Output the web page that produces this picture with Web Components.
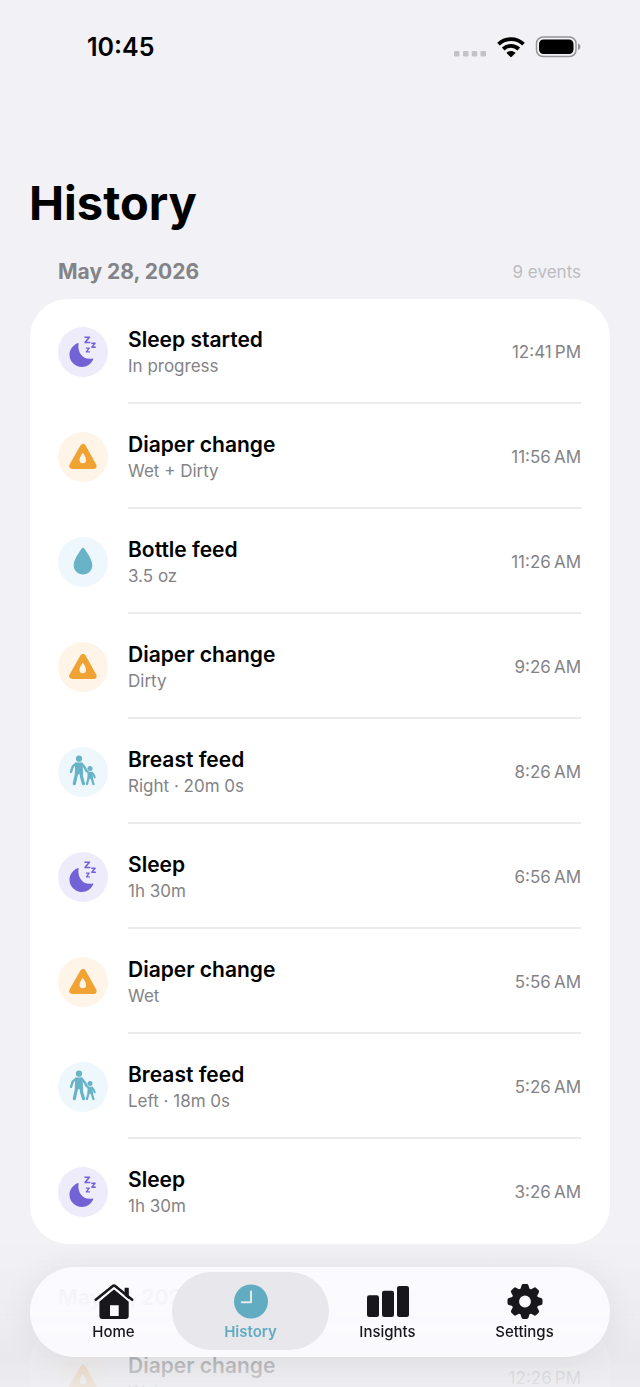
<!DOCTYPE html>
<html lang="en">
<head>
<meta charset="utf-8">
<meta name="viewport" content="width=device-width, initial-scale=1">
<title>History</title>
<style>
  body {
    margin: 0;
    background: #f1f1f6;
    color: #000;
    font-family: Inter, "Noto Sans", sans-serif;
  }
</style>
</head>
<body>
<history-app></history-app>

<script>
const icons = {
  sleep: `<svg viewBox="0 0 50 50" aria-hidden="true">
    <path fill="currentColor" d="M20.6 16.4C19 25.5 25.4 33.6 34.6 31.5Q35.6 31.4 35.2 32.4C33.2 36.9 28.9 39.9 23.8 39.9C17 39.9 11.5 34.4 11.5 27.7C11.5 22.6 14.8 18.2 19.4 16.2Q20.7 15.6 20.6 16.4z"/>
    <g fill="none" stroke="currentColor" stroke-linejoin="round" stroke-linecap="round">
      <path stroke-width="1.6" d="M27 10.2h4.4l-4.4 5.3h4.8"/>
      <path stroke-width="1.4" d="M33.8 16.2h3.3l-3.3 4.1h3.6"/>
      <path stroke-width="1.3" d="M28.4 21.2h2.8l-2.8 3.7h3"/>
    </g>
  </svg>`,
  diaper: `<svg viewBox="0 0 50 50" aria-hidden="true">
    <path fill="currentColor" stroke="currentColor" stroke-width="6" stroke-linejoin="round" d="M25 15L14.2 34h21.4z"/>
    <path fill="var(--tint)" d="M24.8 20.8C26 22.8 28.1 25.3 28.1 27.8a3.3 3.5 0 0 1-6.6 0C21.5 25.3 23.6 22.8 24.8 20.8z"/>
  </svg>`,
  bottle: `<svg viewBox="0 0 50 50" aria-hidden="true">
    <path fill="currentColor" d="M25 10.7C25.7 10.7 26.2 11.3 26.7 12.1C29.6 16.6 34.3 23.2 34.3 28.2C34.3 33.6 30.2 37.4 25 37.4S15.7 33.6 15.7 28.2C15.7 23.2 20.4 16.6 23.3 12.1C23.8 11.3 24.3 10.7 25 10.7z"/>
  </svg>`,
  breast: `<svg viewBox="0 0 50 50" aria-hidden="true">
    <circle cx="21" cy="11.700" r="3.100" fill="currentColor"/>
    <circle cx="32" cy="21.500" r="2.500" fill="currentColor"/>
    <path fill="currentColor" d="M17.200 15.600h7.200l.8 11.600h-8.400z"/>
    <path fill="currentColor" d="M29.600 24.700h4.900l.5 7h-5.600z"/>
    <g fill="none" stroke="currentColor" stroke-linecap="round" stroke-linejoin="round">
      <path stroke-width="2.400" d="M18.200 16.800L14.800 19.400l-1.800 5.400M23.800 16.800l2.900 3.600 1.700 3.200"/>
      <path stroke-width="3.200" d="M18.600 26.500L16.300 36.600M23.200 25.500l.4 4.600 1.900 6.500"/>
      <path stroke-width="2" d="M30.600 25.800L28 23.600M33.900 25.800l1.800 1.900 1 2.700"/>
      <path stroke-width="2.300" d="M30.700 31L28.900 37M33.700 31l1.700 6"/>
    </g>
  </svg>`,
  home: `<svg viewBox="0 0 44 36" aria-hidden="true">
    <g fill="currentColor">
      <path d="M32.6 3.8h3.5q.7 0 .7.7v11l-4.2-3.4z"/>
      <path fill-rule="evenodd" d="M22 5.3L36.7 17.5V32q0 3-3 3H10.4q-3 0-3-3V17.5zM18 21.3h8.700V32H18z"/>
    </g>
    <path fill="none" stroke="currentColor" stroke-width="2.6" stroke-linecap="round" stroke-linejoin="round" d="M3.8 15.8L20.9 1.9q1.1-.8 2.2 0L40.2 15.8"/>
    <path fill="none" stroke="#fbfbfe" stroke-width="1.500" d="M4.800 18.300L21.200 4.800q.8-.6 1.600 0L39.200 18.300"/>
  </svg>`,
  history: `<svg viewBox="0 0 44 36" aria-hidden="true">
    <circle cx="22" cy="17.5" r="17" fill="currentColor"/>
    <path fill="none" stroke="#e9e9ed" stroke-width="2" stroke-linecap="round" stroke-linejoin="round" d="M22 7.4v10.800h-9.200"/>
  </svg>`,
  insights: `<svg viewBox="0 0 44 36" aria-hidden="true" fill="currentColor">
    <rect x="1" y="11.3" width="12" height="21.7" rx="2.2"/>
    <rect x="16" y="6.8" width="12" height="26.2" rx="2.2"/>
    <rect x="31" y="2" width="12" height="31" rx="2.2"/>
  </svg>`,
  settings: `<svg viewBox="0 0 44 36" aria-hidden="true">
    <circle cx="22" cy="17.5" r="9.7" fill="none" stroke="currentColor" stroke-width="7.6"/>
    <g fill="currentColor">
      ${[0, 45, 90, 135, 180, 225, 270, 315].map((a) =>
        `<path transform="rotate(${a} 22 17.5)" d="M17 6.5L18.5 1.4Q18.900 0 20.300 0h3.400Q25.100 0 25.500 1.400l1.500 5.100z"/>`
      ).join('')}
    </g>
  </svg>`
};

const days = [
  {
    date: 'May 28, 2026',
    events: [
      ['sleep', 'Sleep started', 'In progress', '12:41', 'PM'],
      ['diaper', 'Diaper change', 'Wet + Dirty', '11:56', 'AM'],
      ['bottle', 'Bottle feed', '3.5 oz', '11:26', 'AM'],
      ['diaper', 'Diaper change', 'Dirty', '9:26', 'AM'],
      ['breast', 'Breast feed', 'Right · 20m 0s', '8:26', 'AM'],
      ['sleep', 'Sleep', '1h 30m', '6:56', 'AM'],
      ['diaper', 'Diaper change', 'Wet', '5:56', 'AM'],
      ['breast', 'Breast feed', 'Left · 18m 0s', '5:26', 'AM'],
      ['sleep', 'Sleep', '1h 30m', '3:26', 'AM']
    ]
  },
  {
    date: 'May 27, 2026',
    events: [
      ['diaper', 'Diaper change', 'Wet', '12:26', 'PM']
    ]
  }
];

class StatusBar extends HTMLElement {
  constructor() {
    super();
    this.attachShadow({ mode: 'open' }).innerHTML = `
      <style>
        :host {
          display: flex;
          justify-content: space-between;
          align-items: center;
          padding: 32px 58px 0 87px;
          font-size: 25px;
          line-height: 30px;
          font-weight: 600;
        }
        .signals {
          display: flex;
          align-items: center;
          gap: 10px;
        }
        svg {
          display: block;
        }
      </style>
      <time>10:45</time>
      <div class="signals">
        <svg width="33" height="22" viewBox="0 0 33 22" fill="#c2c2c7" aria-label="No signal">
          <rect x="0" y="15" width="5.5" height="5.5" rx="1.2"/>
          <rect x="9" y="15" width="5.5" height="5.5" rx="1.2"/>
          <rect x="17.7" y="15" width="5.5" height="5.5" rx="1.2"/>
          <rect x="26.5" y="15" width="5.5" height="5.5" rx="1.2"/>
        </svg>
        <svg width="28" height="22" viewBox="0 0 28 22" aria-label="Wi-Fi">
          <path fill="none" stroke="#000" stroke-width="3.8" d="M1.5 8.2C8.4 1.5 19.6 1.5 26.5 8.2M6.2 13C10.7 8.9 17.3 8.9 21.8 13"/>
          <path d="M9.8 16.5c2.5-2.1 5.9-2.1 8.4 0q.4.4 0 .8l-3.5 3.5q-.7.6-1.4 0L9.8 17.3q-.4-.4 0-.8z"/>
        </svg>
        <svg width="47" height="22" viewBox="0 0 47 22" aria-label="Battery full">
          <rect x="1.5" y="1" width="39.5" height="19.5" rx="6.5" fill="none" stroke="#96969a" stroke-width="1.5"/>
          <rect x="4" y="3.5" width="34.5" height="14.5" rx="4.5"/>
          <path fill="#96969a" d="M43 7.5c3.2 1.2 3.2 5.3 0 6.5z"/>
        </svg>
      </div>
    `;
  }
}

class EventRow extends HTMLElement {
  constructor() {
    super();
    this.attachShadow({ mode: 'open' });
  }

  connectedCallback() {
    this.shadowRoot.innerHTML = `
      <style>
        :host {
          display: grid;
          grid-template-columns: 50px 1fr;
          column-gap: 20px;
          padding: 0 29px 0 28px;
        }
        :host([icon="sleep"]) { --ink: #7362d6; --tint: #eeecfb; }
        :host([icon="diaper"]) { --ink: #f0a332; --tint: #fef4e7; }
        :host([icon="bottle"]), :host([icon="breast"]) { --ink: #68b3c7; --tint: #edf7fc; }
        .badge {
          align-self: center;
          height: 50px;
          border-radius: 50%;
          background: var(--tint);
          color: var(--ink);
        }
        .badge svg {
          display: block;
        }
        .main {
          display: flex;
          align-items: center;
          justify-content: space-between;
          padding: 27px 0 24px;
          border-bottom: 2px solid #ebebed;
        }
        :host(:last-child) .main {
          border-color: transparent;
        }
        .title {
          font-size: 21px;
          line-height: 28px;
          font-weight: 600;
        }
        .detail, .time {
          font-size: 17px;
          line-height: 24px;
          color: #838386;
        }
      </style>
      <div class="badge">${icons[this.getAttribute('icon')]}</div>
      <div class="main">
        <div>
          <div class="title"><slot name="title"></slot></div>
          <div class="detail"><slot name="detail"></slot></div>
        </div>
        <div class="time"><slot name="time"></slot></div>
      </div>
    `;
  }
}

class DaySection extends HTMLElement {
  constructor() {
    super();
    this.attachShadow({ mode: 'open' }).innerHTML = `
      <style>
        :host {
          display: block;
          padding: 0 30px 40px;
        }
        header {
          display: flex;
          align-items: center;
          justify-content: space-between;
          padding: 0 29px 13px 28px;
          line-height: 28px;
        }
        h2 {
          margin: 0;
          font-size: 21px;
          font-weight: 700;
          color: #838388;
        }
        .count {
          font-size: 17px;
          color: #bcbcc1;
        }
        .card {
          border-radius: 38px;
          background: #fff;
        }
      </style>
      <header>
        <h2><slot name="date"></slot></h2>
        <span class="count"><slot name="count"></slot></span>
      </header>
      <div class="card"><slot></slot></div>
    `;
  }
}

class TabItem extends HTMLElement {
  constructor() {
    super();
    this.attachShadow({ mode: 'open' });
  }

  connectedCallback() {
    const icon = this.getAttribute('icon');
    this.shadowRoot.innerHTML = `
      <style>
        :host {
          display: flex;
          flex: 1;
          color: #18181c;
        }
        /* the pill is wider than its tab by 10px on each side */
        :host([selected]) {
          margin: 0 -10px;
          flex-basis: 20px;
          border-radius: 40px;
          background: #e8e8ec;
          color: #62acc2;
        }
        a {
          flex: 1;
          display: flex;
          flex-direction: column;
          align-items: center;
          gap: 2px;
          padding: 12px 0 8px;
          color: inherit;
          text-decoration: none;
          font-size: 15px;
          line-height: 20px;
          font-weight: 500;
        }
        :host([selected]) a {
          font-weight: 600;
        }
        svg {
          display: block;
          width: 44px;
          height: 36px;
        }
      </style>
      <a href="#${icon}">${icons[icon]}<span><slot></slot></span></a>
    `;
  }
}

class TabBar extends HTMLElement {
  constructor() {
    super();
    this.attachShadow({ mode: 'open' }).innerHTML = `
      <style>
        :host {
          display: block;
          padding: 24px 30px 30px;
          background: linear-gradient(rgba(236, 236, 240, 0), rgba(235, 235, 239, .7) 50%, rgba(230, 230, 234, .78) 80%, rgba(236, 236, 240, .9));
        }
        nav {
          display: flex;
          padding: 5px 17px 7px 15px;
          border-radius: 45px;
          background: rgba(252, 252, 255, .9);
          box-shadow: 0 4px 34px rgba(0, 0, 0, .07);
        }
      </style>
      <nav><slot></slot></nav>
    `;
  }
}

class HistoryApp extends HTMLElement {
  constructor() {
    super();
    this.attachShadow({ mode: 'open' }).innerHTML = `
      <style>
        :host {
          display: flex;
          flex-direction: column;
          height: 100vh;
          overflow: hidden;
        }
        main {
          flex: 1;
          min-height: 0;
          overflow: hidden;
        }
        h1 {
          margin: 0;
          padding: 111px 29px 25px;
          font-size: 47px;
          line-height: 60px;
          font-weight: 700;
        }
        tab-bar {
          position: fixed;
          left: 0;
          right: 0;
          bottom: 0;
        }
      </style>
      <status-bar></status-bar>
      <main>
        <h1>History</h1>
        ${days.map(({ date, events }, i) => `
          <day-section>
            <span slot="date">${date}</span>
            ${i == 0 ? `<span slot="count">${events.length} events</span>` : ''}
            ${events.map(([icon, title, detail, time, half]) => `
              <event-row icon="${icon}">
                <span slot="title">${title}</span>
                <span slot="detail">${detail}</span>
                <time slot="time">${time}&#8239;${half}</time>
              </event-row>
            `).join('')}
          </day-section>
        `).join('')}
      </main>
      <tab-bar>
        <tab-item icon="home">Home</tab-item>
        <tab-item icon="history" selected>History</tab-item>
        <tab-item icon="insights">Insights</tab-item>
        <tab-item icon="settings">Settings</tab-item>
      </tab-bar>
    `;
  }
}

window.customElements.define('status-bar', StatusBar);
window.customElements.define('event-row', EventRow);
window.customElements.define('day-section', DaySection);
window.customElements.define('tab-item', TabItem);
window.customElements.define('tab-bar', TabBar);
window.customElements.define('history-app', HistoryApp);
</script>
</body>
</html>
